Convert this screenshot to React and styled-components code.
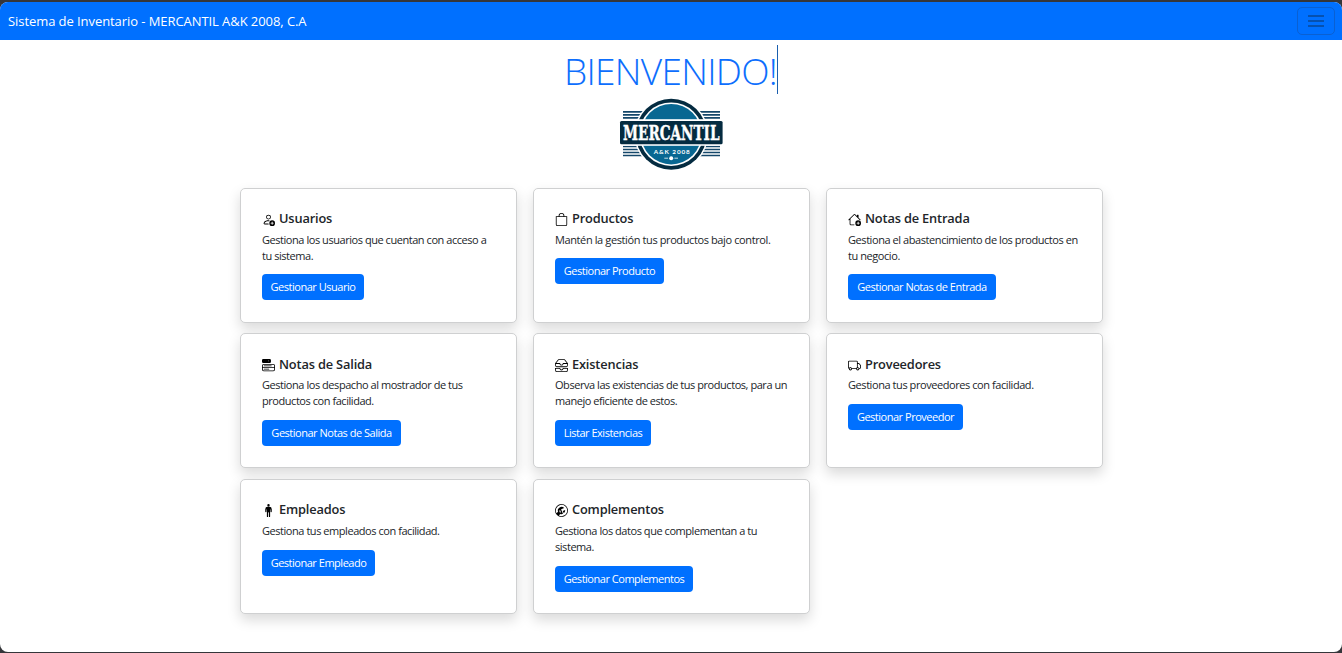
import React from "react";
import styled, { createGlobalStyle } from "styled-components";
import {
  BsPersonAdd,
  BsBag,
  BsHouseAdd,
  BsMenuButtonFill,
  BsInboxes,
  BsTruck,
  BsPersonStanding,
  BsWrenchAdjustableCircle,
} from "react-icons/bs";

const GlobalStyle = createGlobalStyle`
  * { box-sizing: border-box; }
  body {
    margin: 0;
    background: #35363a;
    color: #212529;
    font-family: "Open Sans", "Noto Sans", sans-serif;
  }
`;

const Page = styled.div`
  height: 653px;
  padding: 2px 0 1px;
`;

const Screen = styled.div`
  height: 650px;
  background: #fff;
  border-radius: 8px;
  overflow: hidden;
`;

const Navbar = styled.nav`
  display: flex;
  align-items: center;
  justify-content: space-between;
  height: 38px;
  padding: 0 7px 0 8px;
  background: #0070ff;
`;

const Brand = styled.span`
  color: #fff;
  font-size: 13px;
  line-height: 20px;
  letter-spacing: -0.07px;
  white-space: nowrap;
`;

const Toggler = styled.button`
  display: flex;
  align-items: center;
  justify-content: center;
  width: 38px;
  height: 28px;
  padding: 0;
  background: transparent;
  border: 1px solid #0a60d2;
  border-radius: 5px;
`;

const Hero = styled.header`
  display: flex;
  flex-direction: column;
  align-items: center;
  padding-top: 5px;
`;

const Welcome = styled.h1`
  height: 49px;
  margin: 0;
  border-right: 1px solid #1a5fae;
  color: #0d6efd;
  font-size: 37px;
  font-weight: 300;
  line-height: 52px;
  letter-spacing: -0.7px;
  white-space: nowrap;
`;

const Logo = styled.svg`
  display: block;
  width: 110px;
  height: 80px;
  overflow: visible;
`;

const Grid = styled.main`
  display: grid;
  grid-template-columns: repeat(3, 277px);
  grid-auto-rows: 135px;
  gap: 10.6px 16px;
  width: 863px;
  margin: 13.6px 0 0 240px;
`;

const Card = styled.section`
  padding: 21px 20px 0 21px;
  background: #fff;
  border: 1px solid #cfd0d1;
  border-radius: 5px;
  box-shadow: 0 6px 13px rgba(0, 0, 0, 0.15);
`;

const Title = styled.h2`
  display: flex;
  align-items: center;
  gap: 4px;
  height: 17px;
  margin: 0 0 5px;
  font-size: 12.8px;
  font-weight: 600;
  letter-spacing: -0.16px;
  white-space: nowrap;

  svg {
    flex: none;
    width: 13px;
    height: 13px;
    margin-top: 3px;
    color: #000;
  }
`;

const Text = styled.p`
  margin: 0 0 10.8px;
  font-size: 11px;
  line-height: 16px;
  letter-spacing: ${(p) => p.$spacing ?? -0.45}px;
  white-space: pre;
`;

const Action = styled.button`
  display: block;
  width: ${(p) => p.$width}px;
  height: 26px;
  padding: 0 0 1px;
  border: 0;
  border-radius: 4px;
  background: #0070ff;
  color: #fff;
  font-family: inherit;
  font-size: 11px;
  letter-spacing: -0.48px;
  text-align: center;
  white-space: nowrap;
`;

const cards = [
  { icon: BsPersonAdd, title: "Usuarios", text: "Gestiona los usuarios que cuentan con acceso a\ntu sistema.", action: "Gestionar Usuario", width: 102 },
  { icon: BsBag, title: "Productos", text: "Mantén la gestión tus productos bajo control.", action: "Gestionar Producto", width: 109, spacing: -0.39 },
  { icon: BsHouseAdd, title: "Notas de Entrada", text: "Gestiona el abastencimiento de los productos en\ntu negocio.", action: "Gestionar Notas de Entrada", width: 148, spacing: -0.43 },
  { icon: BsMenuButtonFill, title: "Notas de Salida", text: "Gestiona los despacho al mostrador de tus\nproductos con facilidad.", action: "Gestionar Notas de Salida", width: 139 },
  { icon: BsInboxes, title: "Existencias", text: "Observa las existencias de tus productos, para un\nmanejo eficiente de estos.", action: "Listar Existencias", width: 96 },
  { icon: BsTruck, title: "Proveedores", text: "Gestiona tus proveedores con facilidad.", action: "Gestionar Proveedor", width: 115, spacing: -0.43 },
  { icon: BsPersonStanding, title: "Empleados", text: "Gestiona tus empleados con facilidad.", action: "Gestionar Empleado", width: 113 },
  { icon: BsWrenchAdjustableCircle, title: "Complementos", text: "Gestiona los datos que complementan a tu\nsistema.", action: "Gestionar Complementos", width: 138 },
];

function MercantilLogo() {
  return (
    <Logo viewBox="616 94 110 80" role="img" aria-label="Mercantil A&K 2008">
      <g stroke="#15476a" strokeWidth="1.7">
        {[111.8, 114.8, 117.8, 146.5, 149.5, 152.5, 155.5].map((y) => (
          <path key={y} d={`M623 ${y}H720`} />
        ))}
      </g>
      <circle cx="671.2" cy="134.2" r="37" fill="#fff" />
      <circle cx="671.2" cy="134.2" r="35.5" fill="#042b40" />
      <circle cx="671.2" cy="134.2" r="31.8" fill="#fff" />
      <circle cx="671.2" cy="134.2" r="30.2" fill="#086792" />
      <rect x="619" y="119.2" width="104.6" height="26.6" fill="#fff" />
      <rect x="620" y="121" width="102.6" height="23.2" rx="1.5" fill="#042b40" />
      <text
        x="623"
        y="140.2"
        fill="#fff"
        stroke="#fff"
        strokeWidth="0.4"
        fontFamily="'DejaVu Serif Condensed', 'DejaVu Serif', serif"
        fontSize="21"
        fontWeight="700"
        textLength="96.5"
        lengthAdjust="spacingAndGlyphs"
      >
        MERCANTIL
      </text>
      <text
        x="653.8"
        y="154"
        fill="#fff"
        fontFamily="Lato, sans-serif"
        fontSize="6.4"
        fontWeight="700"
        textLength="36"
      >
        A&amp;K 2008
      </text>
      <circle cx="671.2" cy="158.2" r="2" fill="#fff" />
      <path d="M664.3 158.2H668M674.4 158.2H678" stroke="#c5dde7" strokeWidth="1" />
    </Logo>
  );
}

export default function App() {
  return (
    <Page>
      <GlobalStyle />
      <Screen>
        <Navbar>
          <Brand>Sistema de Inventario - MERCANTIL A&amp;K 2008, C.A</Brand>
          <Toggler aria-label="Menú">
            <svg width="18" height="14" viewBox="0 0 18 14" stroke="#084796" strokeWidth="1.5">
              <path d="M1 2H17M1 7H17M1 12H17" />
            </svg>
          </Toggler>
        </Navbar>
        <Hero>
          <Welcome>BIENVENIDO!</Welcome>
          <MercantilLogo />
        </Hero>
        <Grid>
          {cards.map(({ icon: Icon, title, text, action, width, spacing }) => (
            <Card key={title}>
              <Title>
                <Icon />
                {title}
              </Title>
              <Text $spacing={spacing}>{text}</Text>
              <Action $width={width}>{action}</Action>
            </Card>
          ))}
        </Grid>
      </Screen>
    </Page>
  );
}
